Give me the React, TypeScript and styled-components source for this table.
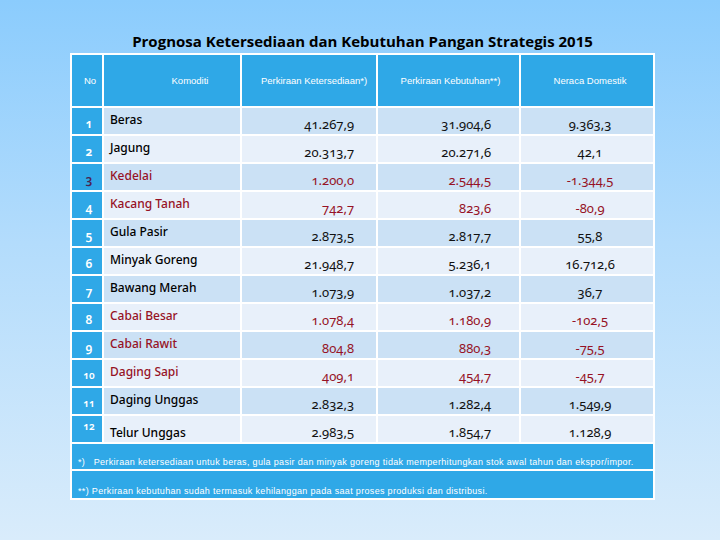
import { type FC } from 'react';
import styled, { createGlobalStyle } from 'styled-components';

const GlobalStyle = createGlobalStyle`
  html, body {
    margin: 0;
    padding: 0;
  }
  body {
    width: 720px;
    height: 540px;
    overflow: hidden;
    background: linear-gradient(180deg, #8bccfd 0%, #b3dcfc 45%, #d9ecfb 100%);
    font-family: 'Noto Sans', 'Liberation Sans', sans-serif;
  }
`;

const Slide = styled.div`
  display: flex;
  flex-direction: column;
  align-items: center;
  width: 585px;
  padding: 31px 0 0 70px;
`;

const Title = styled.h1`
  margin: 0 0 2px;
  font-family: 'Open Sans', 'Liberation Sans', sans-serif;
  font-size: 15px;
  line-height: 20px;
  font-weight: 700;
  color: #000;
`;

const Table = styled.table`
  width: 585px;
  border-collapse: separate;
  border-spacing: 2px;
  background: #ffffff;
  table-layout: fixed;
`;

const HeadCell = styled.th<{ $padLeft?: number }>`
  height: 51px;
  padding: 0 0 0 ${(p) => p.$padLeft ?? 0}px;
  background: #2fa8e7;
  color: #ffffff;
  font-family: 'Liberation Sans', sans-serif;
  font-size: 9.5px;
  font-weight: 400;
  text-align: center;
  vertical-align: middle;
`;

const Row = styled.tr<{ $odd: boolean }>`
  height: 26px;
  background: ${(p) => (p.$odd ? '#cbe1f5' : '#e8f0fa')};
`;

const NoCell = styled.td<{ $dark?: boolean; $small?: boolean; $top?: boolean }>`
  padding: ${(p) => (p.$top ? '0 0 6px 4px' : '4px 0 0 4px')};
  background: #2fa8e7;
  color: ${(p) => (p.$dark ? '#4a2350' : '#ffffff')};
  font-family: 'Noto Sans', sans-serif;
  font-variant-numeric: oldstyle-nums;
  font-size: ${(p) => (p.$small ? 10 : 12)}px;
  font-weight: 600;
  text-align: center;
  vertical-align: middle;
`;

const NameCell = styled.td<{ $red: boolean; $low?: boolean }>`
  padding: ${(p) => (p.$low ? '0 0 2px 6px' : '4px 0 0 6px')};
  color: ${(p) => (p.$red ? '#961225' : '#000000')};
  font-family: 'Noto Sans', sans-serif;
  font-size: 12px;
  font-weight: 500;
  line-height: 15px;
  text-align: left;
  vertical-align: ${(p) => (p.$low ? 'bottom' : 'top')};
  white-space: nowrap;
`;

const NumCell = styled.td<{
  $red: boolean;
  $align: 'right' | 'center';
  $pad: number;
}>`
  padding: ${(p) =>
    p.$align === 'right' ? `0 ${p.$pad}px 2px 0` : `0 0 2px ${p.$pad}px`};
  color: ${(p) => (p.$red ? '#961225' : '#111111')};
  font-family: 'Noto Sans', sans-serif;
  font-variant-numeric: oldstyle-nums;
  font-size: 13px;
  line-height: 16px;
  text-align: ${(p) => p.$align};
  vertical-align: bottom;
  white-space: nowrap;
`;

const NoteCell = styled.td<{ $h: number }>`
  height: ${(p) => p.$h}px;
  padding: 0 0 1px 6px;
  background: #2fa8e7;
  color: #ffffff;
  font-family: 'Liberation Sans', sans-serif;
  font-size: 9px;
  letter-spacing: 0.33px;
  line-height: 11px;
  text-align: left;
  vertical-align: bottom;
  white-space: pre;
`;

type Item = {
  no: number;
  name: string;
  supply: string;
  demand: string;
  balance: string;
  red?: boolean;
};

const items: Item[] = [
  { no: 1, name: 'Beras', supply: '41.267,9', demand: '31.904,6', balance: '9.363,3' },
  { no: 2, name: 'Jagung', supply: '20.313,7', demand: '20.271,6', balance: '42,1' },
  { no: 3, name: 'Kedelai', supply: '1.200,0', demand: '2.544,5', balance: '-1.344,5', red: true },
  { no: 4, name: 'Kacang Tanah', supply: '742,7', demand: '823,6', balance: '-80,9', red: true },
  { no: 5, name: 'Gula Pasir', supply: '2.873,5', demand: '2.817,7', balance: '55,8' },
  { no: 6, name: 'Minyak Goreng', supply: '21.948,7', demand: '5.236,1', balance: '16.712,6' },
  { no: 7, name: 'Bawang Merah', supply: '1.073,9', demand: '1.037,2', balance: '36,7' },
  { no: 8, name: 'Cabai Besar', supply: '1.078,4', demand: '1.180,9', balance: '-102,5', red: true },
  { no: 9, name: 'Cabai Rawit', supply: '804,8', demand: '880,3', balance: '-75,5', red: true },
  { no: 10, name: 'Daging Sapi', supply: '409,1', demand: '454,7', balance: '-45,7', red: true },
  { no: 11, name: 'Daging Unggas', supply: '2.832,3', demand: '1.282,4', balance: '1.549,9' },
  { no: 12, name: 'Telur Unggas', supply: '2.983,5', demand: '1.854,7', balance: '1.128,9' },
];

const App: FC = () => {
  return (
    <>
      <GlobalStyle />
      <Slide>
        <Title>Prognosa Ketersediaan dan Kebutuhan Pangan Strategis 2015</Title>
        <Table>
          <colgroup>
            <col style={{ width: 30 }} />
            <col style={{ width: 136 }} />
            <col style={{ width: 134 }} />
            <col style={{ width: 141 }} />
            <col style={{ width: 132 }} />
          </colgroup>
          <thead>
            <tr>
              <HeadCell $padLeft={6}>No</HeadCell>
              <HeadCell $padLeft={36}>Komoditi</HeadCell>
              <HeadCell $padLeft={10}>Perkiraan Ketersediaan*)</HeadCell>
              <HeadCell $padLeft={4}>Perkiraan Kebutuhan**)</HeadCell>
              <HeadCell $padLeft={6}>Neraca Domestik</HeadCell>
            </tr>
          </thead>
          <tbody>
            {items.map((it) => (
              <Row key={it.no} $odd={it.no % 2 === 1}>
                <NoCell $dark={it.no === 3} $small={it.no >= 10} $top={it.no === 12}>
                  {it.no}
                </NoCell>
                <NameCell $red={!!it.red} $low={it.no === 12}>
                  {it.name}
                </NameCell>
                <NumCell $red={!!it.red} $align="right" $pad={22}>
                  {it.supply}
                </NumCell>
                <NumCell $red={!!it.red} $align="right" $pad={28}>
                  {it.demand}
                </NumCell>
                <NumCell $red={!!it.red} $align="center" $pad={6}>
                  {it.balance}
                </NumCell>
              </Row>
            ))}
            <tr>
              <NoteCell colSpan={5} $h={24}>
                {'*)   Perkiraan ketersediaan untuk beras, gula pasir dan minyak goreng tidak memperhitungkan stok awal tahun dan ekspor/impor.'}
              </NoteCell>
            </tr>
            <tr>
              <NoteCell colSpan={5} $h={26}>
                {'**) Perkiraan kebutuhan sudah termasuk kehilanggan pada saat proses produksi dan distribusi.'}
              </NoteCell>
            </tr>
          </tbody>
        </Table>
      </Slide>
    </>
  );
};

export default App;
